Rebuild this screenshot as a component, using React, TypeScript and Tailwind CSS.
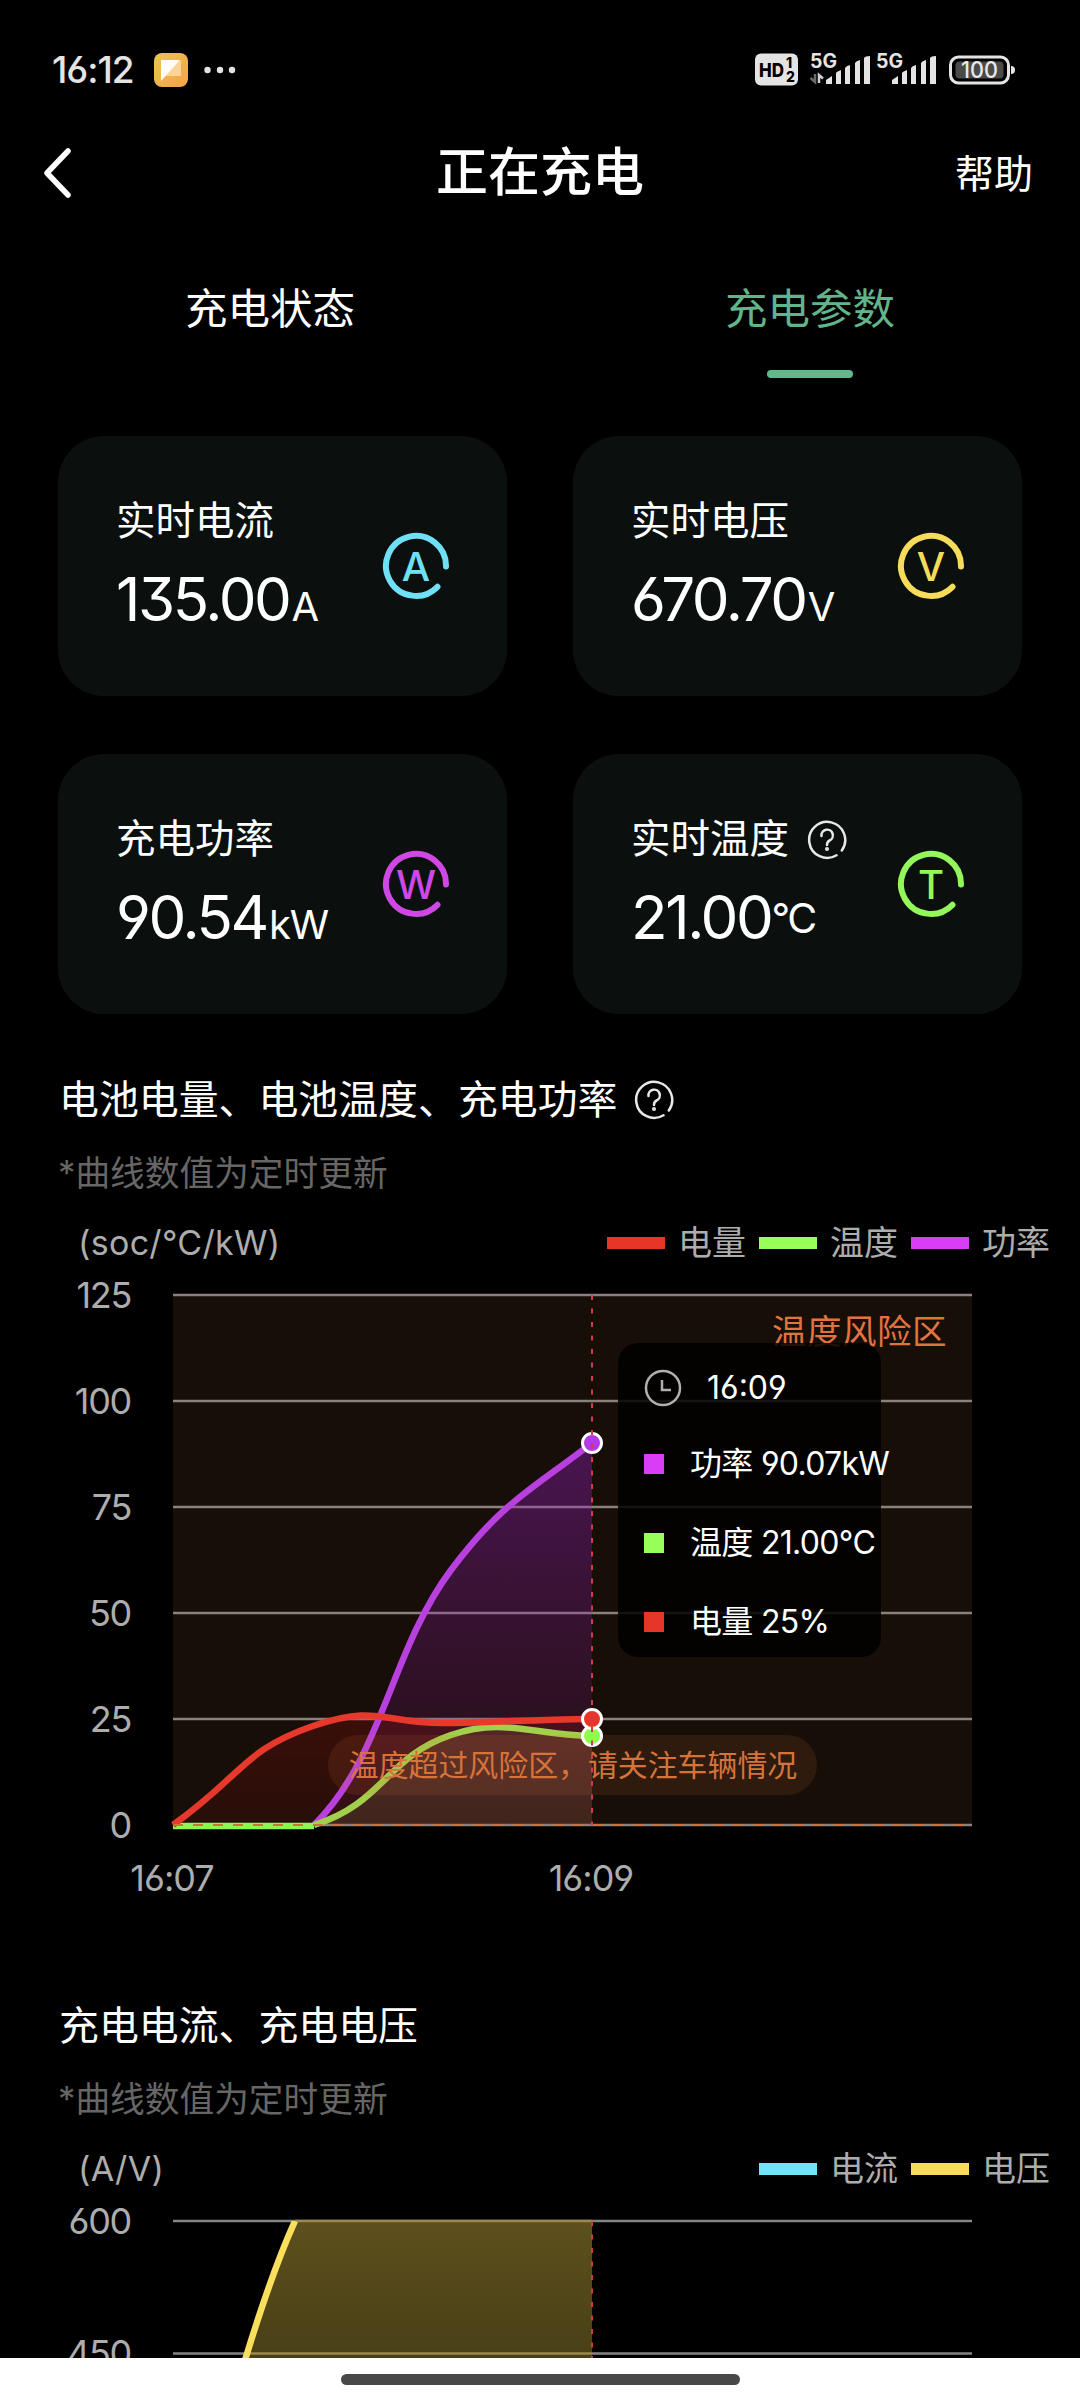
import React from "react";

interface Metric {
  label: string;
  value: string;
  unit: string;
  letter: string;
  color: string;
  help?: boolean;
}

interface LegendItem {
  label: string;
  color: string;
}

const metrics: Metric[] = [
  { label: "实时电流", value: "135.00", unit: "A", letter: "A", color: "#6fe0f5" },
  { label: "实时电压", value: "670.70", unit: "V", letter: "V", color: "#f5dc5a" },
  { label: "充电功率", value: "90.54", unit: "kW", letter: "W", color: "#cf48e6" },
  { label: "实时温度", value: "21.00", unit: "°C", letter: "T", color: "#93f75c", help: true },
];

const batteryLegend: LegendItem[] = [
  { label: "电量", color: "#e8352a" },
  { label: "温度", color: "#97ff58" },
  { label: "功率", color: "#d93df5" },
];

const currentLegend: LegendItem[] = [
  { label: "电流", color: "#70e4fa" },
  { label: "电压", color: "#f9db57" },
];

const tooltipRows = [
  { label: "功率", value: "90.07kW", color: "#d93df5" },
  { label: "温度", value: "21.00°C", color: "#97ff58" },
  { label: "电量", value: "25%", color: "#e8352a" },
];

const POWER = "M141 530 C210 462 217 357 278 275 C329 207 357 196 419 148";
const TEMP = "M141 530 C211 508 213 462 278 440 C332 422 357 440 419 441";
const SOC = "M0 530 C70 480 70 455 140 431 C208 408 210 430 278 428 C348 426 360 425 419 424";
const VOLTAGE = "M46 230 Q88 75 122 0";

function Signal() {
  return (
    <g fill="#e4e4e4">
      <path d="M0 28 V24 L6 20 V28 Z" />
      <path d="M10 28 V17 Q10 16 15 14 V28 Z" />
      <path d="M19 28 V12 Q20 10 24 9 V28 Z" />
      <path d="M29 28 V7 Q30 5 34 4 V28 Z" />
      <path d="M38 28 V2 Q39 0 44 0 V28 Z" />
    </g>
  );
}

function StatusBar() {
  return (
    <div className="flex h-[140px] shrink-0 items-center justify-between pr-[64px] pl-[52px]">
      <div className="flex items-center">
        <span className="w-[102px] text-[37px] font-medium tracking-[-1px] text-[#e4e4e4]">16:12</span>
        <svg className="size-[34px]" viewBox="0 0 34 34">
          <defs>
            <linearGradient id="note" x1="0" y1="0" x2="1" y2="1">
              <stop offset="0" stopColor="#e8c84f" />
              <stop offset="1" stopColor="#f7a04a" />
            </linearGradient>
          </defs>
          <rect width="34" height="34" rx="8" fill="url(#note)" />
          <path d="M7 23 H27 V7 Z" fill="#fbd49a" />
          <path d="M7 7 H26 L7 28 Z" fill="#fffdf5" />
        </svg>
        <svg className="ml-4 h-2 w-8" viewBox="0 0 32 8" fill="#e4e4e4">
          <circle cx="3.5" cy="4" r="3.2" />
          <circle cx="16" cy="4" r="3.2" />
          <circle cx="28" cy="4" r="3.2" />
        </svg>
      </div>
      <svg className="h-[54px] w-[261px]" viewBox="0 -10 261 54">
        <rect width="43" height="32" y="0.5" rx="6" fill="#e4e4e4" />
        <text x="4" y="23.5" fontSize="19" fontWeight="800" textLength="25" lengthAdjust="spacingAndGlyphs">HD</text>
        <text x="31" y="15" fontSize="14" fontWeight="800">1</text>
        <text x="31" y="29" fontSize="14" fontWeight="800">2</text>

        <g fill="#e4e4e4" fontSize="19.500" fontWeight="700">
          <text x="55" y="15" textLength="27" lengthAdjust="spacingAndGlyphs">5G</text>
          <text x="121" y="15" textLength="27" lengthAdjust="spacingAndGlyphs">5G</text>
        </g>
        <path d="M60 21 V29 L55.500 25" fill="none" stroke="#6b6b6b" strokeWidth="2.500" />
        <path d="M64 30 V22 L68 25.500" fill="none" stroke="#d0d0d0" strokeWidth="2.500" />
        <g transform="translate(71 3)">
          <Signal />
        </g>
        <g transform="translate(137 3)">
          <Signal />
        </g>

        <rect x="195.500" y="4" width="58" height="26" rx="8" fill="none" stroke="#e4e4e4" strokeWidth="3" />
        <rect x="200.500" y="8.500" width="48" height="17" rx="4" fill="#4a4a4a" />
        <text x="224.500" y="25" textAnchor="middle" fontSize="23" fontWeight="500" fill="#e8e8e8" textLength="37" lengthAdjust="spacingAndGlyphs">
          100
        </text>
        <path d="M256 13 Q260 13 260 17 Q260 21 256 21 Z" fill="#e4e4e4" />
      </svg>
    </div>
  );
}

function Header() {
  return (
    <header className="grid h-[66px] shrink-0 grid-cols-3 items-center px-[43px] leading-none">
      <svg className="h-[50px] w-[28px]" viewBox="0 0 28 50" fill="none" stroke="#fff" strokeWidth="5.500" strokeLinecap="round" strokeLinejoin="round">
        <path d="M25 3 L4 25 L25 47" />
      </svg>
      <h1 className="text-center text-[52px] font-medium whitespace-nowrap">正在充电</h1>
      <span className="pr-[4px] text-right text-[39px]">帮助</span>
    </header>
  );
}

function Tabs() {
  return (
    <nav className="flex h-[172px] shrink-0 text-[42.500px] leading-none">
      <div className="flex flex-1 flex-col items-center pt-[82px]">充电状态</div>
      <div className="flex flex-1 flex-col items-center justify-between pt-[82px] text-[#62b48b]">
        充电参数
        <span className="h-2 w-[86px] rounded-full bg-[#61b88c]" />
      </div>
    </nav>
  );
}

function HelpIcon() {
  return (
    <svg className="size-[40px]" viewBox="0 0 40 40" fill="none" stroke="#e8e8e8" strokeWidth="2.500" strokeLinecap="round">
      <path d="M34.800 30.400 A18 18 0 1 0 29.500 35.300" />
      <path d="M14.500 16 A5.700 5.700 0 1 1 22.600 20.500 Q20 21.800 20 25" />
      <circle cx="20" cy="29" r="0.800" fill="#e8e8e8" />
    </svg>
  );
}

function MetricCard({ metric }: { metric: Metric }) {
  return (
    <div className="flex h-[260px] items-center justify-between rounded-[46px] bg-[#0b100e] pr-[57px] pl-[58px]">
      <div className="flex flex-col pt-[2px]">
        <div className="flex h-10 items-center gap-[18px] text-[39.500px] leading-none whitespace-nowrap">
          {metric.label}
          {metric.help && <HelpIcon />}
        </div>
        <div className="mt-[20px] h-[70px] text-[60px] leading-[74px] tracking-[-2.400px] whitespace-nowrap">
          {metric.value}
          <span
            className={
              metric.unit === "°C"
                ? "align-[6px] text-[41px] leading-none"
                : "ml-[2px] text-[40px] leading-none tracking-[-1px]"
            }
          >
            {metric.unit}
          </span>
        </div>
      </div>
      <svg className="size-[68px]" viewBox="0 0 68 68">
        <path d="M64 34.500 A30 30 0 1 0 55.500 54.800" fill="none" stroke={metric.color} strokeWidth="6" strokeLinecap="round" />
        <text x="34" y="48.500" textAnchor="middle" fontSize="40" fontWeight="500" fill={metric.color}>
          {metric.letter}
        </text>
      </svg>
    </div>
  );
}

function ChartHeading({ title, unit, legend, help }: { title: string; unit: string; legend: LegendItem[]; help?: boolean }) {
  return (
    <>
      <div className="flex h-10 items-center gap-[17px] pt-px pl-[59px] text-[39.900px] leading-none">
        {title}
        {help && <HelpIcon />}
      </div>
      <p className="mt-[34px] h-10 pl-[58px] text-[34.700px] leading-10 text-[#666]">*曲线数值为定时更新</p>
      <div className="mt-[27px] flex h-11 items-center justify-between pt-px pr-[30px] pl-[78px] text-[34px] leading-none text-[#adadad]">
        <span className="tracking-[0.300px]">{unit}</span>
        <div className="flex gap-[13px]">
          {legend.map((item) => (
            <div key={item.label} className="flex items-center gap-[13px]">
              <span className="h-3 w-[58px]" style={{ backgroundColor: item.color }} />
              {item.label}
            </div>
          ))}
        </div>
      </div>
    </>
  );
}

function Tooltip() {
  return (
    <div className="absolute top-[79px] left-[618px] h-[314px] w-[263px] rounded-[20px] bg-black/85 pt-[25px] pl-[26px] text-[32px] leading-10 whitespace-nowrap">
      <div className="flex h-10 items-center gap-[25px]">
        <svg className="size-[38px]" viewBox="0 0 38 38" fill="none" stroke="#b0b0b0" strokeWidth="2.500">
          <circle cx="19" cy="19" r="17" />
          <path d="M18 11 V21 H27" />
        </svg>
        16:09
      </div>
      <div className="mt-9 flex flex-col gap-[39px]">
        {tooltipRows.map((row) => (
          <div key={row.label} className="flex h-10 items-center gap-[26px]">
            <span className="size-5 shrink-0" style={{ backgroundColor: row.color }} />
            <span className="tracking-[-0.700px]">
              {row.label} {row.value}
            </span>
          </div>
        ))}
      </div>
    </div>
  );
}

function BatteryChart() {
  return (
    <div className="relative h-[661px]">
      <svg className="block h-[661px] w-full" viewBox="0 0 1080 661">
        <defs>
          <linearGradient id="power" x1="0" y1="0" x2="0" y2="1">
            <stop offset="0" stopColor="#a01fd0" stopOpacity="0.370" />
            <stop offset="1" stopColor="#a01fa0" stopOpacity="0.060" />
          </linearGradient>
          <linearGradient id="soc" x1="0" y1="0" x2="0" y2="1">
            <stop offset="0" stopColor="#e01010" stopOpacity="0.180" />
            <stop offset="1" stopColor="#e01010" stopOpacity="0.080" />
          </linearGradient>
        </defs>
        <g transform="translate(173 31)">
          <rect width="799" height="530" fill="#170e08" />
          {[125, 100, 75, 50, 25, 0].map((tick, i) => (
            <g key={tick}>
              <path d={`M0 ${i * 106} H799`} stroke="#8a817c" strokeWidth="2.500" />
              <text x="-42" y={i * 106 + 12.5} textAnchor="end" fontSize="36" letterSpacing="-1.3" fill="#adadad">
                {tick}
              </text>
            </g>
          ))}
          <path d={`${POWER} V530 Z`} fill="url(#power)" />
          <path d={`${SOC} V530 Z`} fill="url(#soc)" />
          <path d={`${TEMP} V530 Z`} fill="#97a060" fillOpacity="0.160" />
          <path d={POWER} fill="none" stroke="#b840de" strokeWidth="6.500" />
          <path d="M0 531 H141" stroke="#8ff552" strokeWidth="6.500" />
          <path d={TEMP} fill="none" stroke="#a2cf4c" strokeWidth="6.500" />
          <path d={SOC} fill="none" stroke="#e6392c" strokeWidth="6.500" />
          <rect x="155" y="440" width="489" height="60" rx="30" fill="#e07038" fillOpacity="0.120" />
          <path d="M0 530 H799" stroke="#d0703a" strokeWidth="2" strokeDasharray="10 10" />
          <circle cx="419" cy="441" r="9.500" fill="#8cff4c" stroke="#fff" strokeWidth="3" />
          <circle cx="419" cy="424" r="9.500" fill="#e8352a" stroke="#fff" strokeWidth="3" />
          <circle cx="419" cy="148" r="9.500" fill="#b33ae6" stroke="#fff" strokeWidth="3" />
          <path d="M419 0 V530" stroke="#d23a4c" strokeWidth="2" strokeDasharray="5 8.500" />
          <text x="400" y="481" textAnchor="middle" fontSize="29.900" fill="#d6733b">
            温度超过风险区，请关注车辆情况
          </text>
          <text x="774" y="49" textAnchor="end" fontSize="34.500" letterSpacing="0.500" fill="#e0733f">
            温度风险区
          </text>
          <g fontSize="36" letterSpacing="-1" fill="#adadad" textAnchor="middle">
            <text x="-1" y="596">16:07</text>
            <text x="418" y="596">16:09</text>
          </g>
        </g>
      </svg>
      <Tooltip />
    </div>
  );
}

function CurrentChart() {
  return (
    <svg className="block h-[300px] w-full" viewBox="0 0 1080 300">
      <defs>
        <linearGradient id="voltage" x1="0" y1="0" x2="0" y2="1">
          <stop offset="0" stopColor="#5d501d" />
          <stop offset="1" stopColor="#3c3412" />
        </linearGradient>
        <clipPath id="plot">
          <rect width="799" height="300" />
        </clipPath>
      </defs>
      <g transform="translate(173 31)">
        {[600, 450].map((tick, i) => (
          <g key={tick}>
            <path d={`M0 ${i * 132.5} H799`} stroke="#858585" strokeWidth="2.500" />
            <text x="-42" y={i * 132.5 + 12.5} textAnchor="end" fontSize="36" letterSpacing="-1.3" fill="#adadad">
              {tick}
            </text>
          </g>
        ))}
        <path d={`${VOLTAGE} H419 V230 Z`} fill="url(#voltage)" />
        <path d="M122 0 H419 M74 132.500 H419" stroke="#9a8950" strokeWidth="2.500" />
        <path d={VOLTAGE} fill="none" stroke="#f8df5c" strokeWidth="6.500" clipPath="url(#plot)" />
        <path d="M419 0 V230" stroke="#c8452c" strokeWidth="2" strokeDasharray="5 8.500" />
      </g>
    </svg>
  );
}

export default function App() {
  return (
    <div className="flex h-[2400px] w-[1080px] flex-col bg-black font-[Inter,'Noto_Sans_CJK_SC',sans-serif] text-white [font-feature-settings:'cv03','cv04','cv09']">
      <div className="flex min-h-0 flex-1 flex-col overflow-hidden">
        <StatusBar />
        <Header />
        <Tabs />
        <main className="mt-[58px] shrink-0">
          <div className="grid grid-cols-2 gap-x-[66px] gap-y-[58px] px-[58px]">
            {metrics.map((metric) => (
              <MetricCard key={metric.label} metric={metric} />
            ))}
          </div>
          <section className="mt-[65px]">
            <ChartHeading title="电池电量、电池温度、充电功率" unit="(soc/°C/kW)" legend={batteryLegend} help />
            <BatteryChart />
          </section>
          <section className="mt-[80px]">
            <ChartHeading title="充电电流、充电电压" unit="(A/V)" legend={currentLegend} />
            <CurrentChart />
          </section>
        </main>
      </div>
      <footer className="flex h-[42px] shrink-0 items-center justify-center bg-white">
        <span className="h-[11px] w-[399px] rounded-full bg-[#484848]" />
      </footer>
    </div>
  );
}
